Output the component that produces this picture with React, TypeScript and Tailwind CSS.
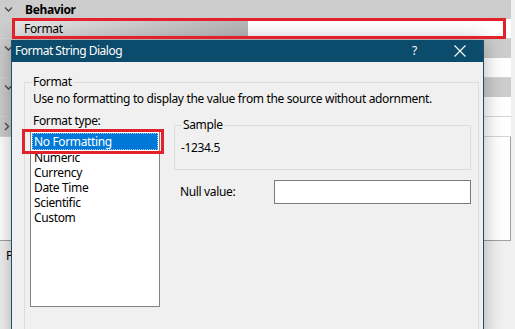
const rows = [
  { kind: "cat", label: "Behavior", open: true },
  { kind: "item", label: "Format", selected: true },
  { kind: "cat", label: "", open: true },
  { kind: "item", label: "" },
  { kind: "cat", label: "", open: true },
  { kind: "item", label: "" },
  { kind: "item", label: "", expand: true },
];

const types = ["No Formatting", "Numeric", "Currency", "Date Time", "Scientific", "Custom"];

const Chevron = ({ open }: { open?: boolean }) => (
  <svg width="9" height="9" viewBox="0 0 9 9" className="text-[#4a4a4a]">
    {open ? (
      <path d="M1 2.5 L4.5 6 L8 2.5" fill="none" stroke="currentColor" strokeWidth="1.3" />
    ) : (
      <path d="M3 1 L6.5 4.5 L3 8" fill="none" stroke="currentColor" strokeWidth="1.3" />
    )}
  </svg>
);

const PropertyGrid = () => (
  <div className="flex flex-col w-[511px]">
    {rows.map((r, i) =>
      r.kind === "cat" ? (
        <div key={i} className="flex h-[19px] items-center bg-[#cccccc]">
          <div className="w-[13px] flex justify-center pl-[3px]">
            <Chevron open={r.open} />
          </div>
          <span className="ml-[12px] font-bold">{r.label}</span>
        </div>
      ) : (
        <div key={i} className="flex h-[20px] border-b border-[#d4d4d4]">
          <div className="w-[12px] flex items-center justify-center bg-[#cccccc]">
            {r.expand && <Chevron />}
          </div>
          <div
            className={
              r.selected
                ? "w-[236px] flex items-center pl-[12px] bg-gradient-to-r from-[#e4e4e4] to-[#b6b6b6]"
                : "w-[236px] flex items-center pl-[12px] bg-white border-r border-[#d4d4d4]"
            }
          >
            {r.label}
          </div>
          <div className="flex-1 bg-white" />
        </div>
      )
    )}
    <div className="h-[104px] bg-white border-b border-r border-[#a0a0a0]" />
    <div className="pt-[6px] pl-[6px]">P</div>
  </div>
);

const FormatDialog = () => (
  <div className="absolute left-[11px] top-[40px] w-[473px] h-[300px] bg-[#f0f0f0] border-x border-[#1f4f6a] shadow-[0_0_18px_rgba(0,0,0,0.3)] flex flex-col">
    <div className="h-[22px] bg-[#0b4b6b] text-white flex items-center pl-[3px] text-[12px] tracking-[-0.5px]">
      <span className="flex-1">Format String Dialog</span>
      <span className="w-[10px] mr-[32px]">?</span>
      <svg width="12" height="12" viewBox="0 0 12 12" className="mr-[17px]">
        <path d="M0.5 0.5 L11.5 11.5 M11.5 0.5 L0.5 11.5" stroke="white" strokeWidth="1.1" />
      </svg>
    </div>
    <div className="ml-[12px] mr-[4px] mt-[20px] flex-1 border-t border-x border-[#dcdcdc]">
      <span className="block w-fit -mt-[9px] ml-[7px] px-[1px] bg-[#f0f0f0] leading-[16px]">Format</span>
      <div className="mt-[1px] pl-[8px] h-[16px] leading-[16px]">
        Use no formatting to display the value from the source without adornment.
      </div>
      <div className="flex">
        <div className="ml-[5px] w-[130px] flex flex-col">
          <div className="mt-[6px] pl-[3px] h-[16px] leading-[16px]">Format type:</div>
          <div className="mt-[1px] h-[177px] bg-white border border-[#828282] px-[1px] pt-[2px]">
            {types.map((t, i) =>
              i === 0 ? (
                <div key={t} className="h-[17px] leading-[15px] pl-[2px] bg-[#0078d7] text-white border border-dotted border-[#9fc9ef]">
                  <span className="-ml-[1px]">{t}</span>
                </div>
              ) : (
                <div key={t} className="h-[15px] leading-[15px] pl-[2px]">
                  {t}
                </div>
              )
            )}
          </div>
        </div>
        <div className="ml-[14px] w-[297px] flex flex-col">
          <div className="mt-[18px] h-[45px] border border-[#dcdcdc]">
            <span className="block w-fit -mt-[9px] ml-[7px] px-[1px] bg-[#f0f0f0] leading-[16px]">Sample</span>
            <div className="mt-[7px] pl-[6px] leading-[16px]">-1234.5</div>
          </div>
          <div className="mt-[10px] flex items-center">
            <span className="pl-[6px] w-[100px]">Null value:</span>
            <input className="w-[197px] h-[24px] bg-white border border-[#7a7a7a] outline-none" />
          </div>
        </div>
      </div>
    </div>
  </div>
);

export default function App() {
  return (
    <div className="relative w-[515px] h-[329px] overflow-hidden bg-[#f0f0f0] text-[12px] tracking-[-0.35px] text-black font-['Segoe_UI','Noto_Sans',sans-serif]">
      <PropertyGrid />
      <FormatDialog />
      <div className="absolute left-[12px] top-[18px] w-[494px] h-[21px] border-[3px] border-[#e0222a]" />
      <div className="absolute left-[22px] top-[129px] w-[142px] h-[25px] border-[3px] border-[#e0222a]" />
    </div>
  );
}
